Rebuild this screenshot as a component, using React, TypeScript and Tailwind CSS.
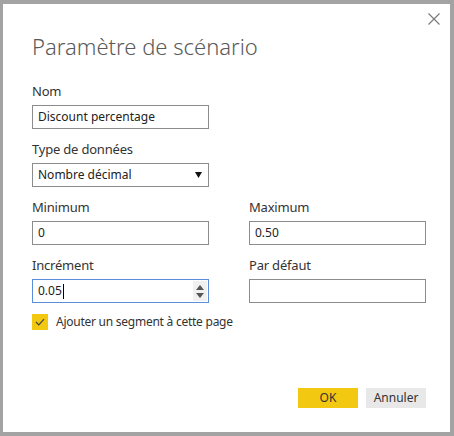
import React from 'react';

const font = { fontFamily: '"Noto Sans", "Open Sans", sans-serif' };

const Field: React.FC<{ label: string; children: React.ReactNode }> = ({ label, children }) => (
  <div className="flex flex-col">
    <label className="text-[13px] leading-[16px] text-[#333] mb-[6px] tracking-[-0.2px]">{label}</label>
    {children}
  </div>
);

const TextBox: React.FC<{ value: string; focused?: boolean; spinner?: boolean }> = ({ value, focused, spinner }) => (
  <div
    className={
      'h-[24px] w-[177px] flex items-center bg-white border ' +
      (focused ? 'border-[#5b8ed8]' : 'border-[#8c8c8c]')
    }
  >
    <span className="flex-1 pl-[5px] text-[12px] text-[#222] leading-none flex items-center">
      {value}
      {focused && <span className="ml-[1px] inline-block w-[1px] h-[15px] bg-black" />}
    </span>
    {spinner && (
      <div className="h-[20px] w-[14px] mr-[1px] bg-[#f0f0f0] flex flex-col items-center justify-center gap-[3px]">
        <svg width="8" height="5" viewBox="0 0 8 5"><path d="M0 5 L4 0 L8 5 Z" fill="#555" /></svg>
        <svg width="8" height="5" viewBox="0 0 8 5"><path d="M0 0 L8 0 L4 5 Z" fill="#555" /></svg>
      </div>
    )}
  </div>
);

export default function App() {
  return (
    <div className="w-[454px] h-[436px] bg-[#a3a3a3] pt-[4px] pl-[3px] pr-[4px] pb-[4px]" style={font}>
      <div className="relative h-full bg-white flex flex-col pl-[29px] pr-[24px] pb-[24px]">
        <button className="absolute right-[9px] top-[8px] w-[14px] h-[14px] flex items-center justify-center">
          <svg width="12" height="12" viewBox="0 0 12 12">
            <path d="M0.5 0.5 L11.5 11.5 M11.5 0.5 L0.5 11.5" stroke="#777" strokeWidth="1.1" />
          </svg>
        </button>

        <h1 className="mt-[27px] text-[22px] leading-[30px] font-light text-[#5a5a5a]">Paramètre de scénario</h1>

        <div className="mt-[22px] flex flex-col gap-[12px]">
          <Field label="Nom">
            <TextBox value="Discount percentage" />
          </Field>

          <Field label="Type de données">
            <div className="h-[24px] w-[177px] flex items-center justify-between border border-[#8c8c8c] pl-[5px] pr-[6px]">
              <span className="text-[12px] text-[#222]">Nombre décimal</span>
              <svg width="7" height="6" viewBox="0 0 7 6"><path d="M0 0 L7 0 L3.5 6 Z" fill="#111" /></svg>
            </div>
          </Field>

          <div className="grid grid-cols-[177px_177px] gap-x-[40px] gap-y-[12px]">
            <Field label="Minimum">
              <TextBox value="0" />
            </Field>
            <Field label="Maximum">
              <TextBox value="0.50" />
            </Field>
            <Field label="Incrément">
              <TextBox value="0.05" focused spinner />
            </Field>
            <Field label="Par défaut">
              <TextBox value="" />
            </Field>
          </div>

          <div className="-mt-[2px] flex items-center gap-[8px]">
            <div className="w-[16px] h-[16px] bg-[#f2c811] flex items-center justify-center">
              <svg width="10" height="8" viewBox="0 0 10 8">
                <path d="M1 4 L3.8 6.8 L9 1.2" fill="none" stroke="#444" strokeWidth="1.2" />
              </svg>
            </div>
            <span className="text-[12px] text-[#333] tracking-[-0.25px]">Ajouter un segment à cette page</span>
          </div>
        </div>

        <div className="mt-auto flex justify-end gap-[8px]">
          <button className="w-[60px] h-[20px] bg-[#f2c811] text-[12px] text-[#333] leading-none">OK</button>
          <button className="w-[60px] h-[20px] bg-[#e8e8e8] text-[12px] text-[#333] leading-none">Annuler</button>
        </div>
      </div>
    </div>
  );
}
